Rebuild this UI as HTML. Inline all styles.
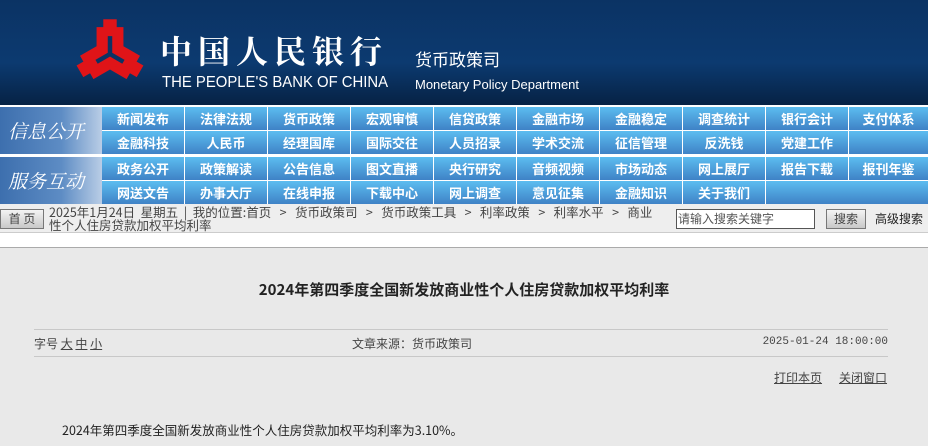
<!DOCTYPE html>
<html><head><meta charset="utf-8">
<style>
*{margin:0;padding:0;box-sizing:border-box}
body{width:928px;height:446px;overflow:hidden;background:#e9e9e9;font-family:"Liberation Sans","Noto Sans CJK SC",sans-serif;position:relative}
.hdr{position:absolute;left:0;top:0;width:928px;height:105px;background:linear-gradient(180deg,#0b3364 0%,#0c3a70 60%,#062244 100%)}
.nav{position:absolute;left:0;width:928px;height:47px}
.lab{position:absolute;left:0;top:0;width:102px;height:47px;background:linear-gradient(90deg,#3d6fae 0%,#5d8cc4 60%,#b9cde6 100%);color:#fff;font-style:italic;font-size:19px;line-height:47px;padding-left:8px;font-family:"Noto Serif CJK SC","Noto Sans CJK SC",sans-serif}
.row{position:absolute;left:102px;width:826px;height:23px;background:linear-gradient(180deg,#5cbdf0,#3f82c6)}
.c{position:absolute;top:0;height:23px;width:83px;text-align:center;color:#fff;font-weight:bold;font-size:13px;line-height:23px;font-family:"Noto Sans CJK SC",sans-serif;border-right:1px solid #fff}
.bc{position:absolute;left:0;top:204px;width:928px;height:29px;background:#eeeeee;font-size:12px;color:#444;border-bottom:1px solid #ccc}
.meta{position:absolute;font-size:12px;color:#444;font-family:"Noto Sans CJK SC",sans-serif;white-space:nowrap}
</style></head><body>
<div class="hdr">
<svg width="160" height="105" style="position:absolute;left:0;top:0">
<g fill="#e01418" transform="translate(110,54) scale(1.12)">
<g><rect x="-6" y="-31" width="12" height="9"/><rect x="-12" y="-24" width="24" height="24"/></g>
<g transform="rotate(120)"><rect x="-6" y="-31" width="12" height="9"/><rect x="-12" y="-24" width="24" height="24"/></g>
<g transform="rotate(240)"><rect x="-6" y="-31" width="12" height="9"/><rect x="-12" y="-24" width="24" height="24"/></g>
<circle r="10"/>
</g>
<g stroke="#0b3364" stroke-width="4" fill="none" transform="translate(110,54) scale(1.12)"><path d="M0 -16V0L-12 7M0 0L12 7"/></g>
</svg>
<div style="position:absolute;left:160px;top:32px;color:#fff;font-size:32px;letter-spacing:6px;font-family:'Noto Serif CJK SC',serif;font-weight:bold;line-height:36px">中国人民银行</div>
<div style="position:absolute;left:162px;top:74px;color:#fff;font-size:16px;line-height:18px;transform:scaleX(0.93);transform-origin:left">THE PEOPLE'S BANK OF CHINA</div>
<div style="position:absolute;left:415px;top:49px;color:#fff;font-size:17px;line-height:20px;font-family:'Noto Sans CJK SC',sans-serif">货币政策司</div>
<div style="position:absolute;left:415px;top:77px;color:#fff;font-size:13px;line-height:16px">Monetary Policy Department</div>
</div>
<div style="position:absolute;left:0;top:105px;width:928px;height:99px;background:#fff"></div>
<div class="nav" style="top:107px"><div class="lab">信息公开</div>
<div class="row" style="top:0"><div class="c" style="left:0">新闻发布</div><div class="c" style="left:83px">法律法规</div><div class="c" style="left:166px">货币政策</div><div class="c" style="left:249px">宏观审慎</div><div class="c" style="left:332px">信贷政策</div><div class="c" style="left:415px">金融市场</div><div class="c" style="left:498px">金融稳定</div><div class="c" style="left:581px">调查统计</div><div class="c" style="left:664px">银行会计</div><div class="c" style="left:747px;border:0;width:79px">支付体系</div></div>
<div class="row" style="top:24px"><div class="c" style="left:0">金融科技</div><div class="c" style="left:83px">人民币</div><div class="c" style="left:166px">经理国库</div><div class="c" style="left:249px">国际交往</div><div class="c" style="left:332px">人员招录</div><div class="c" style="left:415px">学术交流</div><div class="c" style="left:498px">征信管理</div><div class="c" style="left:581px">反洗钱</div><div class="c" style="left:664px">党建工作</div></div>
</div>
<div class="nav" style="top:157px"><div class="lab">服务互动</div>
<div class="row" style="top:0"><div class="c" style="left:0">政务公开</div><div class="c" style="left:83px">政策解读</div><div class="c" style="left:166px">公告信息</div><div class="c" style="left:249px">图文直播</div><div class="c" style="left:332px">央行研究</div><div class="c" style="left:415px">音频视频</div><div class="c" style="left:498px">市场动态</div><div class="c" style="left:581px">网上展厅</div><div class="c" style="left:664px">报告下载</div><div class="c" style="left:747px;border:0;width:79px">报刊年鉴</div></div>
<div class="row" style="top:24px"><div class="c" style="left:0">网送文告</div><div class="c" style="left:83px">办事大厅</div><div class="c" style="left:166px">在线申报</div><div class="c" style="left:249px">下载中心</div><div class="c" style="left:332px">网上调查</div><div class="c" style="left:415px">意见征集</div><div class="c" style="left:498px">金融知识</div><div class="c" style="left:581px">关于我们</div></div>
</div>
<div class="bc">
<div style="position:absolute;left:0;top:5px;width:44px;height:20px;background:linear-gradient(#f4f4f4,#c8c8c8);border:1px solid #777;font-size:12px;line-height:18px;text-align:center;font-family:'Noto Sans CJK SC',sans-serif">首 页</div>
<div style="position:absolute;left:49px;top:1px;width:620px;line-height:13px;font-size:12.5px;font-family:'Noto Sans CJK SC',sans-serif;white-space:nowrap">2025年1月24日&nbsp; 星期五 &nbsp;| &nbsp;我的位置:首页 &nbsp; &gt; &nbsp; 货币政策司 &nbsp; &gt; &nbsp; 货币政策工具 &nbsp; &gt; &nbsp; 利率政策 &nbsp; &gt; &nbsp; 利率水平 &nbsp; &gt; &nbsp; 商业<br>性个人住房贷款加权平均利率</div>
<div style="position:absolute;left:676px;top:5px;width:139px;height:20px;background:#fff;border:1px solid #555;font-size:12px;line-height:18px;color:#555;padding-left:1px;font-family:'Noto Sans CJK SC',sans-serif">请输入搜索关键字</div>
<div style="position:absolute;left:826px;top:5px;width:40px;height:20px;background:linear-gradient(#f4f4f4,#c8c8c8);border:1px solid #777;font-size:12px;line-height:18px;text-align:center;font-family:'Noto Sans CJK SC',sans-serif">搜索</div>
<div style="position:absolute;left:875px;top:6px;font-size:12px;color:#222;font-family:'Noto Sans CJK SC',sans-serif">高级搜索</div>
</div>
<div style="position:absolute;left:0;top:233px;width:928px;height:15px;background:#fff;border-bottom:1px solid #aaa"></div>
<div style="position:absolute;left:0;top:279px;width:928px;text-align:center;font-size:15px;font-weight:bold;color:#222;font-family:'Noto Sans CJK SC',sans-serif">2024年第四季度全国新发放商业性个人住房贷款加权平均利率</div>
<div style="position:absolute;left:34px;top:329px;width:854px;height:1px;background:#c8c8c8"></div>
<div style="position:absolute;left:34px;top:356px;width:854px;height:1px;background:#c8c8c8"></div>
<div class="meta" style="left:34px;top:335px">字号 <u>大</u> <u>中</u> <u>小</u></div>
<div class="meta" style="left:352px;top:335px">文章来源：货币政策司</div>
<div class="meta" style="left:738px;top:336px;font-family:'Liberation Mono',monospace;font-size:11px;width:150px;text-align:right">2025-01-24 18:00:00</div>
<div class="meta" style="left:774px;top:369px"><u>打印本页</u></div>
<div class="meta" style="left:839px;top:369px"><u>关闭窗口</u></div>
<div class="meta" style="left:62px;top:420px;color:#222;font-size:12.5px">2024年第四季度全国新发放商业性个人住房贷款加权平均利率为3.10%。</div>
</body></html>
